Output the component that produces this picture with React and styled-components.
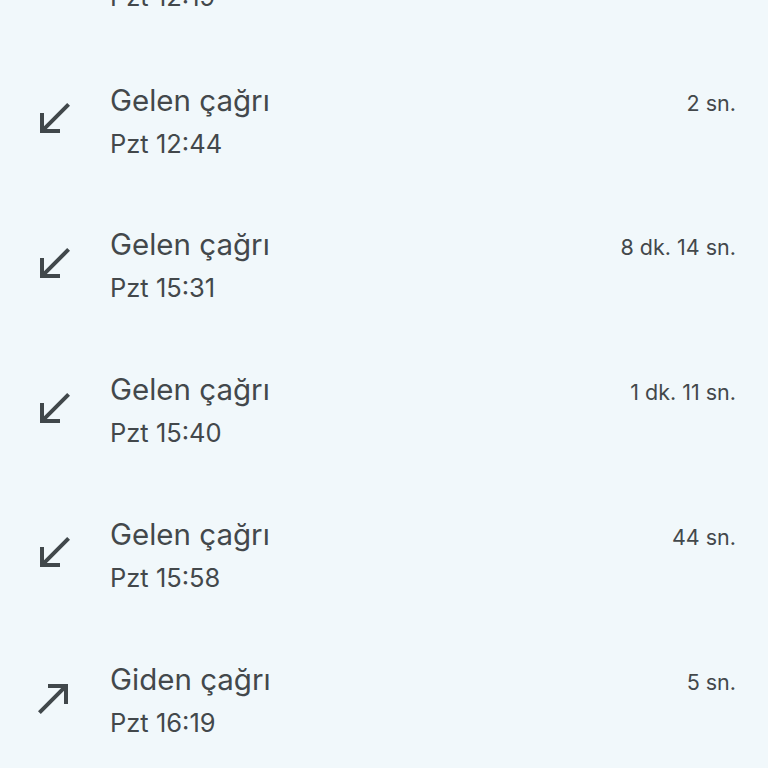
import React from "react";
import styled, { createGlobalStyle } from "styled-components";

const Global = createGlobalStyle`
  html, body { margin: 0; padding: 0; background: #f1f8fb; }
  body { font-family: Inter, Roboto, "Noto Sans", sans-serif; overflow: hidden; }
`;

const Page = styled.div`
  width: 768px;
  height: 768px;
  overflow: hidden;
  background: #f1f8fb;
`;

const List = styled.ul`
  list-style: none;
  margin: -96.5px 0 0 0;
  padding: 0 32px 0 30px;
`;

const Row = styled.li`
  display: flex;
  align-items: center;
  height: 144.75px;
  gap: 32px;
`;

const IconBox = styled.div`
  width: 48px;
  height: 48px;
  flex: 0 0 48px;
  color: #41484b;
  margin-top: -3px;
  svg { display: block; width: 48px; height: 48px; }
`;

const TextCol = styled.div`
  flex: 1;
  display: flex;
  flex-direction: column;
`;

const TopLine = styled.div`
  display: flex;
  justify-content: space-between;
  align-items: baseline;
`;

const Title = styled.span`
  font-size: 29.5px;
  line-height: 40px;
  color: #43484b;
`;

const Duration = styled.span`
  font-size: 21.5px;
  line-height: 40px;
  color: #43484b;
`;

const Sub = styled.span`
  font-size: 25.5px;
  line-height: 36px;
  margin-top: 3px;
  color: #43484b;
`;

const Incoming = () => (
  <svg viewBox="0 0 24 24" fill="currentColor">
    <path d="M20 5.41L18.59 4 7 15.59V9H5v10h10v-2H8.41z" />
  </svg>
);

const Outgoing = () => (
  <svg viewBox="0 0 24 24" fill="currentColor">
    <path d="M9 5v2h6.59L4 18.59 5.41 20 17 8.41V15h2V5z" />
  </svg>
);

const calls = [
  { type: "in", title: "Gelen çağrı", time: "Pzt 12:19", dur: "" },
  { type: "in", title: "Gelen çağrı", time: "Pzt 12:44", dur: "2 sn." },
  { type: "in", title: "Gelen çağrı", time: "Pzt 15:31", dur: "8 dk. 14 sn." },
  { type: "in", title: "Gelen çağrı", time: "Pzt 15:40", dur: "1 dk. 11 sn." },
  { type: "in", title: "Gelen çağrı", time: "Pzt 15:58", dur: "44 sn." },
  { type: "out", title: "Giden çağrı", time: "Pzt 16:19", dur: "5 sn." },
];

export default function App() {
  return (
    <Page>
      <Global />
      <List>
        {calls.map((c, i) => (
          <Row key={i}>
            <IconBox>{c.type === "in" ? <Incoming /> : <Outgoing />}</IconBox>
            <TextCol>
              <TopLine>
                <Title>{c.title}</Title>
                <Duration>{c.dur}</Duration>
              </TopLine>
              <Sub>{c.time}</Sub>
            </TextCol>
          </Row>
        ))}
      </List>
    </Page>
  );
}
